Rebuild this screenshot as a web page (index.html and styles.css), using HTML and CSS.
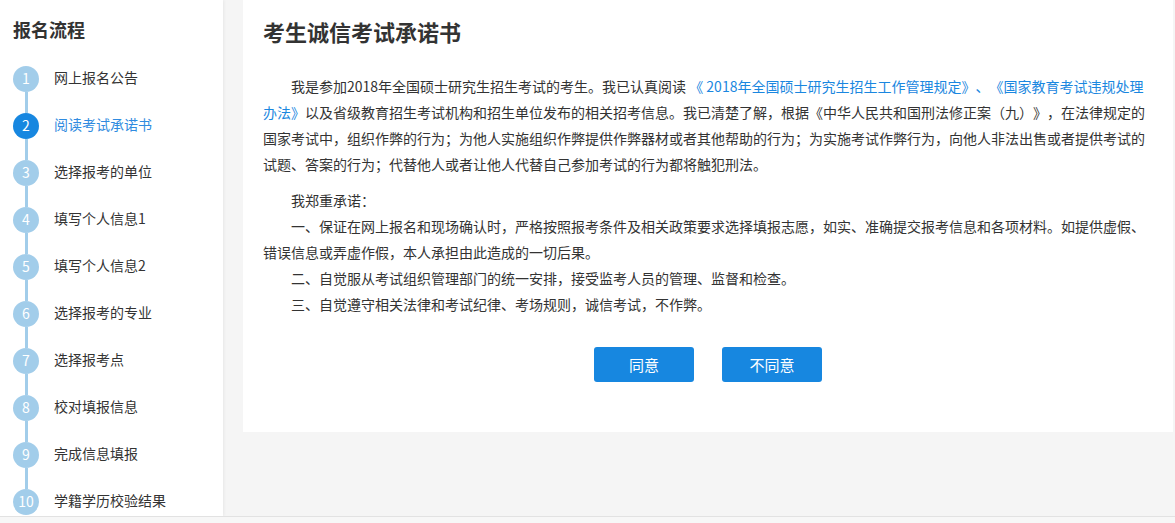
FILE: index.html
```html
<!DOCTYPE html>
<html lang="zh-CN">

<head>
  <meta charset="UTF-8">
  <meta name="viewport" content="width=device-width, initial-scale=1.0">
  <title>考生诚信考试承诺书</title>
  <link rel="stylesheet" href="styles.css">
</head>

<body>
  <div class="page-wrapper">
    <div class="layout">
      <div class="sidebar">
        <h2>报名流程</h2>
        <ul class="steps">
          <li class="step"><div class="marker"><span class="num">1</span><span class="line"></span></div><span class="label">网上报名公告</span></li>
          <li class="step active"><div class="marker"><span class="num">2</span><span class="line"></span></div><span class="label">阅读考试承诺书</span></li>
          <li class="step"><div class="marker"><span class="num">3</span><span class="line"></span></div><span class="label">选择报考的单位</span></li>
          <li class="step"><div class="marker"><span class="num">4</span><span class="line"></span></div><span class="label">填写个人信息1</span></li>
          <li class="step"><div class="marker"><span class="num">5</span><span class="line"></span></div><span class="label">填写个人信息2</span></li>
          <li class="step"><div class="marker"><span class="num">6</span><span class="line"></span></div><span class="label">选择报考的专业</span></li>
          <li class="step"><div class="marker"><span class="num">7</span><span class="line"></span></div><span class="label">选择报考点</span></li>
          <li class="step"><div class="marker"><span class="num">8</span><span class="line"></span></div><span class="label">校对填报信息</span></li>
          <li class="step"><div class="marker"><span class="num">9</span><span class="line"></span></div><span class="label">完成信息填报</span></li>
          <li class="step"><div class="marker"><span class="num">10</span></div><span class="label">学籍学历校验结果</span></li>
        </ul>
      </div>

      <div class="main">
        <div class="card">
          <h1>考生诚信考试承诺书</h1>
          <p class="indent">我是参加2018年全国硕士研究生招生考试的考生。我已认真阅读 <a href="#">《 2018年全国硕士研究生招生工作管理规定》、《国家教育考试违规处理办法》</a>以及省级教育招生考试机构和招生单位发布的相关招考信息。我已清楚了解，根据《中华人民共和国刑法修正案（九）》，在法律规定的国家考试中，组织作弊的行为；为他人实施组织作弊提供作弊器材或者其他帮助的行为；为实施考试作弊行为，向他人非法出售或者提供考试的试题、答案的行为；代替他人或者让他人代替自己参加考试的行为都将触犯刑法。</p>
          <div class="promise">
            <p class="indent">我郑重承诺：</p>
            <p class="indent">一、保证在网上报名和现场确认时，严格按照报考条件及相关政策要求选择填报志愿，如实、准确提交报考信息和各项材料。如提供虚假、错误信息或弄虚作假，本人承担由此造成的一切后果。</p>
            <p class="indent">二、自觉服从考试组织管理部门的统一安排，接受监考人员的管理、监督和检查。</p>
            <p class="indent">三、自觉遵守相关法律和考试纪律、考场规则，诚信考试，不作弊。</p>
          </div>
          <div class="actions">
            <button class="btn">同意</button>
            <button class="btn">不同意</button>
          </div>
        </div>
      </div>
    </div>
    <div class="footer"></div>
  </div>
</body>

</html>
```

FILE: styles.css
```css
* {
  margin: 0;
  padding: 0;
  box-sizing: border-box;
  font-family: "Noto Sans CJK SC", "Liberation Sans", sans-serif;
  text-spacing-trim: space-all;
}

html,
body {
  height: 100%;
  width: 100%;
}

body {
  background-color: #f5f5f5;
  color: #333;
}

.page-wrapper {
  height: 100%;
  display: flex;
  flex-direction: column;
}

.layout {
  flex: 1;
  display: flex;
  min-height: 0;
}

/* sidebar */
.sidebar {
  width: 223px;
  background-color: #fff;
  padding: 18px 0 0 13px;
  box-shadow: 1px 0 3px rgba(0, 0, 0, 0.06);
  overflow: hidden;
}

.sidebar h2 {
  font-size: 18px;
  font-weight: 700;
  line-height: 22px;
  margin-bottom: 26px;
  color: #333;
}

.steps {
  list-style: none;
}

.step {
  display: flex;
  height: 47px;
}

.marker {
  width: 26px;
  display: flex;
  flex-direction: column;
  align-items: center;
}

.num {
  width: 26px;
  height: 26px;
  border-radius: 50%;
  background-color: #a2cdea;
  color: #fff;
  font-size: 14px;
  line-height: 25px;
  text-align: center;
  flex-shrink: 0;
}

.line {
  flex: 1;
  width: 3px;
  background-color: #a2cdea;
}

.label {
  margin-left: 15px;
  font-size: 14px;
  line-height: 23px;
  color: #333;
}

.step.active .num {
  background-color: #1787e0;
}

.step.active .label {
  color: #2f8be0;
}

/* main */
.main {
  flex: 1;
  padding-left: 20px;
  padding-right: 2px;
}

.card {
  background-color: #fff;
  padding: 16px 20px 50px;
}

.card h1 {
  font-size: 22px;
  font-weight: 700;
  line-height: 30px;
  margin-bottom: 27px;
  color: #333;
}

.card p {
  font-size: 14px;
  line-height: 26px;
  color: #333;
}

.card p.indent {
  text-indent: 2em;
}

.card a {
  color: #1a87e0;
  text-decoration: none;
}

.promise {
  margin-top: 10px;
}

.actions {
  display: flex;
  justify-content: center;
  gap: 28px;
  margin-top: 30px;
}

.btn {
  width: 100px;
  height: 35px;
  border: none;
  border-radius: 3px;
  background-color: #1787e0;
  color: #fff;
  font-size: 15px;
  cursor: pointer;
}

.footer {
  height: 7px;
  border-top: 1px solid #e2e2e2;
  background-color: #f7f7f7;
}
```
